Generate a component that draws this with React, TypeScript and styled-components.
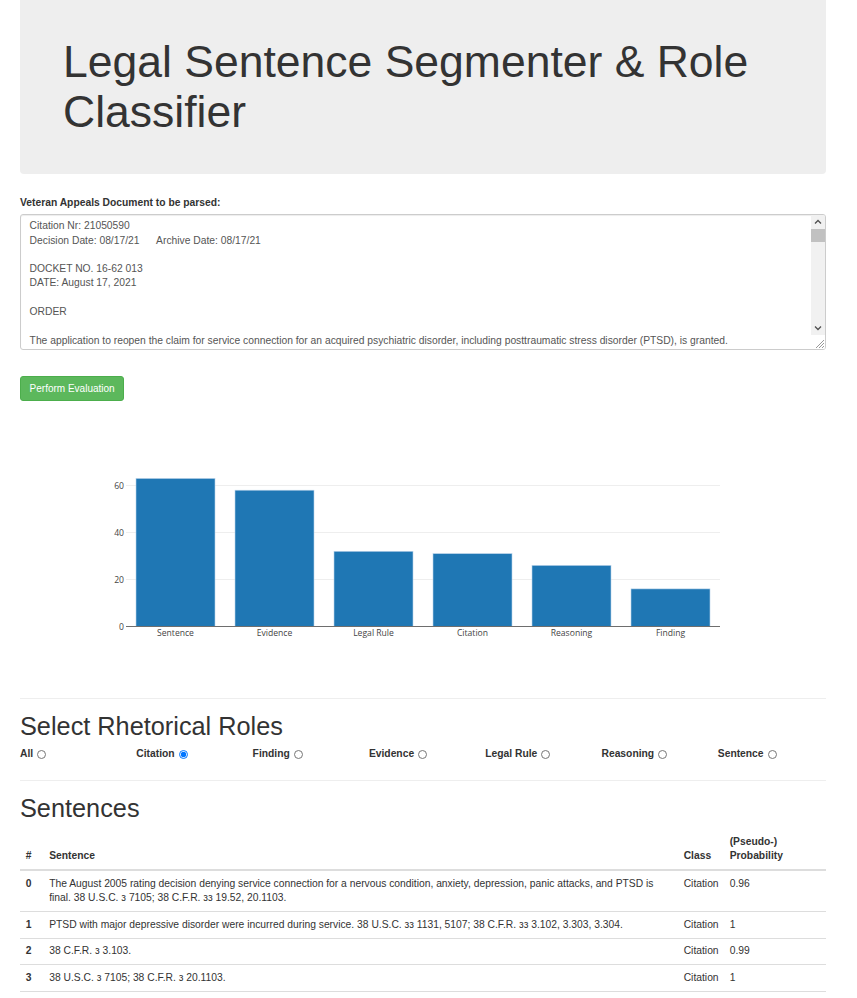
import React from "react";
import styled, { createGlobalStyle } from "styled-components";

const GlobalStyle = createGlobalStyle`
  * { box-sizing: border-box; }
  html, body { margin: 0; padding: 0; background: #fff; }
  body {
    font-family: "Liberation Sans", Arial, Helvetica, sans-serif;
    font-size: 10.3px;
    line-height: 14.3px;
    color: #333;
  }
`;

const Page = styled.div`
  width: 806px;
  margin-left: 20px;
  padding-bottom: 40px;
`;

const Jumbotron = styled.header`
  background: #eee;
  border-radius: 0 0 4px 4px;
  padding: 37px 43px 38px;
`;

const Title = styled.h1`
  margin: 0;
  font-size: 44.5px;
  line-height: 49.5px;
  font-weight: 500;
  color: #333;
`;

const FieldLabel = styled.label`
  display: block;
  margin: 22px 0 4px;
  font-weight: bold;
`;

const TextBox = styled.div`
  display: flex;
  height: 136px;
  border: 1px solid #ccc;
  border-radius: 3px;
  box-shadow: inset 0 1px 1px rgba(0, 0, 0, 0.075);
  overflow: hidden;
`;

const DocArea = styled.textarea`
  flex: 1;
  margin: 0;
  border: 0;
  padding: 4px 8.6px;
  resize: none;
  overflow: hidden;
  font-family: inherit;
  font-size: 10.3px;
  line-height: 14.3px;
  color: #555;
  background: transparent;
  outline: none;
`;

const ScrollBar = styled.div`
  width: 14px;
  display: flex;
  flex-direction: column;
  background: #f1f1f1;
`;

const ScrollArrow = styled.div`
  height: 13px;
  display: flex;
  align-items: center;
  justify-content: center;
`;

const ScrollTrack = styled.div`
  flex: 1;
`;

const ScrollThumb = styled.div`
  height: 13px;
  margin-top: 1px;
  background: #c1c1c1;
`;

const ResizeCorner = styled.div`
  height: 14px;
  background: #fff;
  display: flex;
  align-items: flex-end;
  justify-content: flex-end;
`;

const EvalButton = styled.button`
  display: block;
  margin-top: 26px;
  padding: 4.3px 8.6px;
  font-family: inherit;
  font-size: 10px;
  line-height: 14.3px;
  color: #fff;
  background: #5cb85c;
  border: 1px solid #4cae4c;
  border-radius: 3px;
  cursor: pointer;
`;

const ChartSvg = styled.svg`
  display: block;
  margin-bottom: 14px;
  font-family: "Open Sans", Verdana, Arial, sans-serif;
`;

const Divider = styled.hr`
  margin: 0;
  border: 0;
  border-top: 1px solid #eee;
`;

const SectionTitle = styled.h2`
  margin: 13px 0 7px;
  font-size: 25.3px;
  line-height: 28.3px;
  font-weight: 500;
  color: #333;
`;

const RoleGrid = styled.div`
  display: grid;
  grid-template-columns: repeat(7, 116.3px);
  margin-bottom: 18px;
`;

const RoleOption = styled.label`
  display: inline-flex;
  align-items: center;
  font-weight: bold;
  white-space: nowrap;
  cursor: pointer;
`;

const Radio = styled.input`
  width: 9px;
  height: 9px;
  margin: 0 0 0 4px;
`;

const Table = styled.table`
  width: 100%;
  border-collapse: collapse;
  table-layout: fixed;
`;

const Th = styled.th<{ $w?: string }>`
  width: ${(p) => p.$w ?? "auto"};
  padding: 5.7px;
  text-align: left;
  vertical-align: bottom;
  font-weight: bold;
  border-bottom: 2px solid #ddd;
`;

const Td = styled.td<{ $bold?: boolean }>`
  padding: 5.7px;
  vertical-align: top;
  border-top: 1px solid #ddd;
  font-weight: ${(p) => (p.$bold ? "bold" : "normal")};
`;

const docText = `Citation Nr: 21050590
Decision Date: 08/17/21      Archive Date: 08/17/21

DOCKET NO. 16-62 013
DATE: August 17, 2021

ORDER

The application to reopen the claim for service connection for an acquired psychiatric disorder, including posttraumatic stress disorder (PTSD), is granted.

Service connection for PTSD with major depressive disorder is granted.

FINDINGS OF FACT

1. The August 2005 rating decision denying service connection for a nervous condition, anxiety, depression, panic attacks, and PTSD is final.`;

const counts = [
  { name: "Sentence", value: 63 },
  { name: "Evidence", value: 58 },
  { name: "Legal Rule", value: 32 },
  { name: "Citation", value: 31 },
  { name: "Reasoning", value: 26 },
  { name: "Finding", value: 16 },
];

const roles = ["All", "Citation", "Finding", "Evidence", "Legal Rule", "Reasoning", "Sentence"];

const rows = [
  {
    text: "The August 2005 rating decision denying service connection for a nervous condition, anxiety, depression, panic attacks, and PTSD is final. 38 U.S.C. з 7105; 38 C.F.R. зз 19.52, 20.1103.",
    prob: "0.96",
  },
  {
    text: "PTSD with major depressive disorder were incurred during service. 38 U.S.C. зз 1131, 5107; 38 C.F.R. зз 3.102, 3.303, 3.304.",
    prob: "1",
  },
  { text: "38 C.F.R. з 3.103.", prob: "0.99" },
  { text: "38 U.S.C. з 7105; 38 C.F.R. з 20.1103.", prob: "1" },
  {
    text: "And the evidence received since that decision is new and material to reopen the claim. 38 U.S.C. з 5108; 38 C.F.R. з 3.156(a).",
    prob: "0.98",
  },
];

const ZERO_Y = 225.5;
const PX_PER_UNIT = 2.35;

function BarChart() {
  return (
    <ChartSvg width={806} height={283}>
      {[20, 40, 60].map((t) => (
        <line
          key={t}
          x1={106}
          x2={700}
          y1={ZERO_Y - t * PX_PER_UNIT}
          y2={ZERO_Y - t * PX_PER_UNIT}
          stroke="#eee"
          strokeWidth={1}
        />
      ))}
      {counts.map((c, i) => {
        const h = c.value * PX_PER_UNIT;
        return (
          <rect
            key={c.name}
            x={116 + i * 99}
            y={ZERO_Y - h}
            width={79}
            height={h}
            fill="#1f77b4"
            stroke="#b9d3ea"
            strokeWidth={0.6}
          />
        );
      })}
      <line x1={106} x2={700} y1={ZERO_Y} y2={ZERO_Y} stroke="#6e6e6e" strokeWidth={1} />
      {[0, 20, 40, 60].map((t) => (
        <text
          key={t}
          x={104}
          y={ZERO_Y - t * PX_PER_UNIT + 3}
          textAnchor="end"
          fontSize={8.6}
          fill="#444"
        >
          {t}
        </text>
      ))}
      {counts.map((c, i) => (
        <text
          key={c.name}
          x={116 + i * 99 + 39.5}
          y={235}
          textAnchor="middle"
          fontSize={8.6}
          fill="#444"
        >
          {c.name}
        </text>
      ))}
    </ChartSvg>
  );
}

export default function App() {
  const [role, setRole] = React.useState("Citation");

  return (
    <>
      <GlobalStyle />
      <Page>
        <Jumbotron>
          <Title>Legal Sentence Segmenter &amp; Role Classifier</Title>
        </Jumbotron>

        <FieldLabel htmlFor="doc">Veteran Appeals Document to be parsed:</FieldLabel>
        <TextBox>
          <DocArea id="doc" defaultValue={docText} spellCheck={false} />
          <ScrollBar>
            <ScrollArrow>
              <svg width="8" height="5" viewBox="0 0 8 5">
                <polyline points="1,4.5 4,1.5 7,4.5" fill="none" stroke="#505050" strokeWidth="1.3" />
              </svg>
            </ScrollArrow>
            <ScrollTrack>
              <ScrollThumb />
            </ScrollTrack>
            <ScrollArrow>
              <svg width="8" height="5" viewBox="0 0 8 5">
                <polyline points="1,0.5 4,3.5 7,0.5" fill="none" stroke="#505050" strokeWidth="1.3" />
              </svg>
            </ScrollArrow>
            <ResizeCorner>
              <svg width="12" height="12" viewBox="0 0 12 12">
                <line x1="11" y1="3" x2="3" y2="11" stroke="#999" strokeWidth="1" />
                <line x1="11" y1="6" x2="6" y2="11" stroke="#999" strokeWidth="1" />
                <line x1="11" y1="9" x2="9" y2="11" stroke="#999" strokeWidth="1" />
              </svg>
            </ResizeCorner>
          </ScrollBar>
        </TextBox>

        <EvalButton type="button">Perform Evaluation</EvalButton>

        <BarChart />

        <Divider />
        <SectionTitle>Select Rhetorical Roles</SectionTitle>
        <RoleGrid>
          {roles.map((r) => (
            <RoleOption key={r}>
              {r}
              <Radio
                type="radio"
                name="role"
                checked={role === r}
                onChange={() => setRole(r)}
              />
            </RoleOption>
          ))}
        </RoleGrid>

        <Divider />
        <SectionTitle>Sentences</SectionTitle>
        <Table>
          <thead>
            <tr>
              <Th $w="23.5px">#</Th>
              <Th>Sentence</Th>
              <Th $w="46px">Class</Th>
              <Th $w="102px">(Pseudo-) Probability</Th>
            </tr>
          </thead>
          <tbody>
            {rows.map((row, i) => (
              <tr key={i}>
                <Td $bold>{i}</Td>
                <Td>{row.text}</Td>
                <Td>Citation</Td>
                <Td>{row.prob}</Td>
              </tr>
            ))}
          </tbody>
        </Table>
      </Page>
    </>
  );
}
